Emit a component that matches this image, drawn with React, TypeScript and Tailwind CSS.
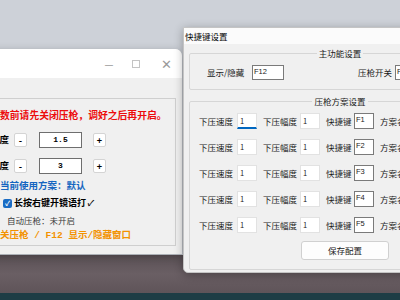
import React from "react";

const cjk = "font-['Noto_Sans_CJK_SC','Noto_Sans',sans-serif]";

const StepRow = ({ value }: { value: string }) => (
  <div className="flex items-center h-[16px]">
    <span className="w-[9px] text-[9.5px] leading-none font-bold text-black overflow-hidden whitespace-nowrap flex justify-end">
      度
    </span>
    <button className="ml-[5px] w-[13px] h-[14px] bg-white border border-[#d4d4d4] rounded-[2px] text-[9px] font-bold leading-none flex items-center justify-center">
      -
    </button>
    <div className="ml-[12px] w-[43px] h-[16px] bg-white border border-[#6e6e6e] flex items-center justify-center text-[8px] font-bold font-['Liberation_Mono',monospace]">
      {value}
    </div>
    <button className="ml-[11px] w-[13px] h-[14px] bg-white border border-[#d4d4d4] rounded-[2px] text-[9px] font-bold leading-none flex items-center justify-center">
      +
    </button>
  </div>
);

const LeftWindow = () => (
  <div className="absolute left-[-10px] top-[49px] w-[192px] h-[205px] bg-[#f0f0f0] rounded-tr-[7px] shadow-[0_2px_8px_rgba(0,0,0,0.25)] overflow-hidden flex flex-col">
    <div className="h-[29px] bg-white flex items-center justify-end text-[#9a9a9a]">
      <span className="text-[10px] leading-none w-[12px] text-center">—</span>
      <span className="ml-[17px] w-[8px] h-[8px] border border-[#c4c4c4]" />
      <span className="ml-[20px] mr-[10px] text-[13px] leading-none font-light w-[12px] text-center">✕</span>
    </div>
    <div className="mt-[20px] mr-[6px] h-[148px] border border-[#cfcfcf] pl-[9px] flex flex-col">
      <div className="mt-[9px] h-[14px] flex items-center text-[9.8px] font-bold text-[#ec0c0c] whitespace-nowrap">
        数前请先关闭压枪，调好之后再开启。
      </div>
      <div className="mt-[10px]">
        <StepRow value="1.5" />
      </div>
      <div className="mt-[10px]">
        <StepRow value="3" />
      </div>
      <div className="mt-[4px] h-[14px] flex items-center text-[9.5px] font-bold text-[#1565c0] whitespace-nowrap">
        当前使用方案：默认
      </div>
      <div className="mt-[4px] h-[14px] flex items-center whitespace-nowrap">
        <span className="ml-[3px] w-[9px] h-[9px] rounded-[2px] bg-[#1a6cc4] flex items-center justify-center text-white text-[7px] leading-none font-bold">
          ✓
        </span>
        <span className="ml-[2px] text-[9px] font-bold text-black">长按右键开镜语打</span>
        <span className="ml-[1px] text-[8px] font-bold text-black italic">✓</span>
      </div>
      <div className="mt-[3px] h-[14px] flex items-center pl-[7px] text-[8.5px] text-[#3a3a3a] whitespace-nowrap">
        自动压枪：未开启
      </div>
      <div className="mt-[2px] h-[14px] flex items-center text-[9.5px] font-bold text-[#f39200] whitespace-pre font-['Liberation_Mono','Noto_Sans_CJK_SC',monospace]">
        关压枪 / F12 显示/隐藏窗口
      </div>
    </div>
  </div>
);

const SchemeRow = ({ n }: { n: number }) => (
  <div className="flex items-center h-[16px] pl-[9px] text-[8.5px] text-[#1a1a1a] whitespace-nowrap">
    <span className="w-[32px]">下压速度</span>
    <div
      className={
        "ml-[6px] w-[20px] h-[16px] bg-white border border-[#e2e2e2] flex items-center pl-[2px] text-[7.5px] " +
        (n === 1 ? "border-b-[#0067c0] border-b-2" : "")
      }
    >
      1
    </div>
    <span className="ml-[6px] w-[33px]">下压幅度</span>
    <div className="ml-[4px] w-[20px] h-[16px] bg-white border border-[#e2e2e2] flex items-center pl-[2px] text-[7.5px]">
      1
    </div>
    <span className="ml-[6px] w-[24px]">快捷键</span>
    <div className="ml-[4px] w-[20px] h-[16px] bg-white border border-[#7a7a7a] flex items-start pl-[1px] text-[7.5px] font-['Liberation_Sans',sans-serif]">
      F{n}
    </div>
    <span className="ml-[6px]">方案名称</span>
  </div>
);

const RightWindow = () => (
  <div className="absolute left-[183px] top-[27px] w-[314px] h-[246px] bg-[#f0f0f0] border border-[#c4c4c4] rounded-b-[5px] shadow-[0_2px_10px_rgba(0,0,0,0.3)] flex flex-col">
    <div className="h-[16px] bg-[#fbfbfb] flex items-center pl-[1px] text-[8.5px] text-black">
      快捷键设置
    </div>
    <fieldset className="mt-[3px] ml-[5px] mr-[5px] border border-[#d6d6d6] rounded-[2px] pb-[9px]">
      <legend className="mx-auto px-[2px] h-[12px] leading-[12px] text-[8.5px] text-[#1a1a1a]">主功能设置</legend>
      <div className="mt-[6px] flex items-center pl-[17px] text-[8.5px] text-[#1a1a1a] whitespace-nowrap">
        <span className="w-[38px]">显示/隐藏</span>
        <div className="ml-[7px] w-[32px] h-[15px] bg-white border border-[#7a7a7a] flex items-start pl-[1px] text-[7.5px] font-['Liberation_Sans',sans-serif]">
          F12
        </div>
        <span className="ml-[74px] w-[33px]">压枪开关</span>
        <div className="ml-[4px] w-[32px] h-[15px] bg-white border border-[#7a7a7a] flex items-start pl-[1px] text-[7.5px] font-['Liberation_Sans',sans-serif]">
          F11
        </div>
      </div>
    </fieldset>
    <fieldset className="mt-[5px] ml-[5px] mr-[5px] border border-[#d6d6d6] rounded-[2px] pb-[9px]">
      <legend className="mx-auto px-[2px] h-[12px] leading-[12px] text-[8.5px] text-[#1a1a1a]">压枪方案设置</legend>
      <div className="mt-[6px] flex flex-col gap-[10px]">
        {[1, 2, 3, 4, 5].map((n) => (
          <SchemeRow key={n} n={n} />
        ))}
      </div>
      <div className="mt-[8px] pl-[111px]">
        <button className="w-[88px] h-[19px] bg-[#fdfdfd] border border-[#d0d0d0] rounded-[3px] text-[8.5px] text-[#1a1a1a] flex items-center justify-center">
          保存配置
        </button>
      </div>
    </fieldset>
  </div>
);

export default function App() {
  return (
    <div className={"relative w-[400px] h-[300px] overflow-hidden " + cjk}>
      <div className="flex flex-col h-full">
        <div className="h-[255px] bg-[#cdd1d8]" />
        <div className="h-[38px] bg-gradient-to-b from-[#5a5055] via-[#6a5f64] to-[#5f5459]" />
        <div className="h-[7px] bg-[#1e3d45]" />
      </div>
      <LeftWindow />
      <RightWindow />
    </div>
  );
}
